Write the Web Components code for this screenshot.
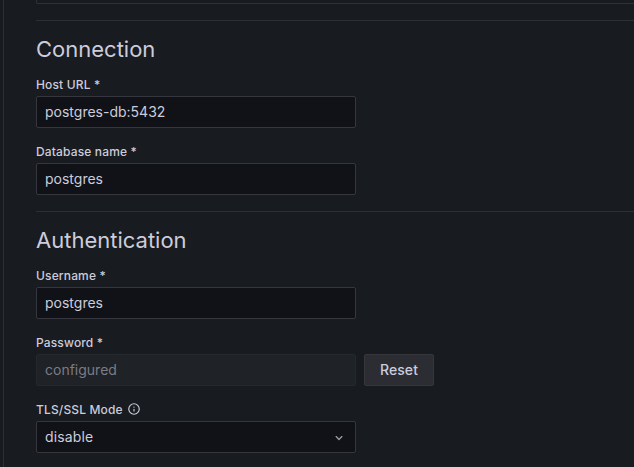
<!DOCTYPE html>
<html lang="en">
<head>
<meta charset="utf-8">
<title>Data source settings</title>
<style>
html, body { margin: 0; height: 100%; overflow: hidden; background: #181b1f; }
body { font-family: Inter, "Liberation Sans", sans-serif; font-size: 14px; color: #ccccdc; }
</style>
</head>
<body>
<settings-page>
  <form-section heading="Connection">
    <form-field label="Host URL *"><text-box>postgres-db:5432</text-box></form-field>
    <form-field label="Database name *"><text-box>postgres</text-box></form-field>
  </form-section>
  <form-section heading="Authentication">
    <form-field label="Username *"><text-box>postgres</text-box></form-field>
    <form-field label="Password *"><text-box disabled>configured</text-box><push-button>Reset</push-button></form-field>
    <form-field label="TLS/SSL Mode"><info-icon slot="icon"></info-icon><select-box>disable</select-box></form-field>
  </form-section>
</settings-page>
<script>
const define = (name, html, setup) => customElements.define(name, class extends HTMLElement {
  constructor() {
    super();
    this.attachShadow({ mode: 'open' }).innerHTML = html;
  }
  connectedCallback() { if (setup) setup(this, this.shadowRoot); }
});

define('settings-page', `
<style>
:host { display: flex; flex-direction: column; box-sizing: border-box; height: 467px; overflow: hidden; }
.panel { flex: 1; min-height: 0; overflow: hidden; margin-left: 3px; padding-left: 32px; border-left: 1px solid #2c2f34; }
.previous { height: 4px; box-sizing: border-box; border: solid #2e3136; border-width: 0 0 1px 1px; border-radius: 0 0 0 2px; margin-bottom: 16px; }
</style>
<div class="panel"><div class="previous"></div><slot></slot></div>`);

define('form-section', `
<style>
:host { display: block; border-top: 1px solid #2c2f34; padding-top: 15px; }
h3 { margin: 0 0 15px; font-size: 22px; line-height: 26px; font-weight: 400; }
.fields { display: flex; flex-direction: column; gap: 16px; padding-bottom: 16px; }
</style>
<h3></h3><div class="fields"><slot></slot></div>`,
(el, root) => { root.querySelector('h3').textContent = el.getAttribute('heading'); });

define('form-field', `
<style>
:host { display: block; }
.label { display: flex; align-items: flex-start; gap: 4px; height: 15px; margin-bottom: 4px; font-size: 12px; line-height: 15px; font-weight: 500; letter-spacing: 0.15px; }
.controls { display: flex; gap: 8px; }
</style>
<div class="label"><span></span><slot name="icon"></slot></div>
<div class="controls"><slot></slot></div>`,
(el, root) => { root.querySelector('span').textContent = el.getAttribute('label'); });

define('text-box', `
<style>
:host { display: block; box-sizing: border-box; width: 320px; height: 32px; padding: 0 8px; border: 1px solid #36373e; border-radius: 2px; background: #111217; line-height: 30px; }
:host([disabled]) { background: #1f2226; border-color: #25282c; color: #7b7c87; }
</style><slot></slot>`);

define('push-button', `
<style>
:host { display: block; box-sizing: border-box; width: 70px; height: 32px; border: 1px solid #36373d; border-radius: 2px; background: #2c2d33; line-height: 30px; font-weight: 500; letter-spacing: 0.1px; text-align: center; }
</style><slot></slot>`);

define('info-icon', `
<style>:host, svg { display: block; width: 14px; height: 14px; }</style>
<svg viewBox="0 0 24 24" fill="#ccccdc"><path d="M12,2A10,10,0,1,0,22,12,10.01114,10.01114,0,0,0,12,2Zm0,18a8,8,0,1,1,8-8A8.00917,8.00917,0,0,1,12,20Zm0-8.5a1,1,0,0,0-1,1v3a1,1,0,0,0,2,0v-3A1,1,0,0,0,12,11.5Zm0-4a1.25,1.25,0,1,0,1.25,1.25A1.25,1.25,0,0,0,12,7.5Z"/></svg>`);

define('select-box', `
<style>
:host { display: flex; align-items: center; justify-content: space-between; box-sizing: border-box; width: 320px; height: 32px; padding: 0 8px; border: 1px solid #36373e; border-radius: 2px; background: #111217; line-height: 30px; letter-spacing: 0.15px; }
svg { display: block; width: 16px; height: 16px; margin-top: 2px; }
</style>
<span><slot></slot></span>
<svg viewBox="0 0 24 24" fill="#9a9aa8"><path d="M17,9.17a1,1,0,0,0-1.41,0L12,12.71,8.46,9.17a1,1,0,0,0-1.41,0,1,1,0,0,0,0,1.42l4.24,4.24a1,1,0,0,0,1.42,0L17,10.59A1,1,0,0,0,17,9.17Z"/></svg>`);
</script>
</body>
</html>
